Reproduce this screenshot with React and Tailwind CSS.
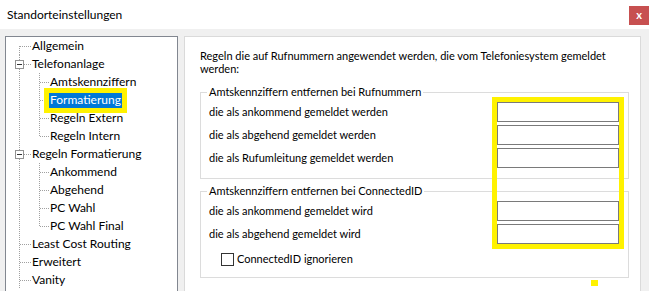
import React from 'react';

const treeItems = [
  { label: 'Allgemein', level: 0, first: true },
  { label: 'Telefonanlage', level: 0, expanded: true },
  { label: 'Amtskennziffern', level: 1 },
  { label: 'Formatierung', level: 1, selected: true },
  { label: 'Regeln Extern', level: 1 },
  { label: 'Regeln Intern', level: 1, last: true },
  { label: 'Regeln Formatierung', level: 0, expanded: true },
  { label: 'Ankommend', level: 1 },
  { label: 'Abgehend', level: 1 },
  { label: 'PC Wahl', level: 1 },
  { label: 'PC Wahl Final', level: 1, last: true },
  { label: 'Least Cost Routing', level: 0 },
  { label: 'Erweitert', level: 0 },
  { label: 'Vanity', level: 0 },
];

const dot = { stroke: '#a0a0a0', strokeWidth: 1, strokeDasharray: '1 1', shapeRendering: 'crispEdges' };

function Gutter({ item }) {
  const w = item.level === 0 ? 25 : 43;
  return (
    <svg width={w} height="18" className="shrink-0">
      {/* root vertical */}
      <line x1="13.5" y1={item.first ? 9 : 0} x2="13.5" y2="18" style={dot} />
      {item.level === 0 && !item.expanded && <line x1="14" y1="9.5" x2="25" y2="9.5" style={dot} />}
      {item.level === 0 && item.expanded && (
        <>
          <line x1="18" y1="9.5" x2="25" y2="9.5" style={dot} />
          <rect x="9.5" y="5.5" width="8" height="8" fill="#fff" stroke="#919191" shapeRendering="crispEdges" />
          <line x1="11" y1="9.5" x2="16" y2="9.5" stroke="#333" shapeRendering="crispEdges" />
        </>
      )}
      {item.level === 1 && (
        <>
          <line x1="33.5" y1="0" x2="33.5" y2={item.last ? 10 : 18} style={dot} />
          <line x1="34" y1="9.5" x2="43" y2="9.5" style={dot} />
        </>
      )}
    </svg>
  );
}

function TreeRow({ item }) {
  return (
    <div className="flex h-[18px] items-stretch">
      <Gutter item={item} />
      {item.selected ? (
        <span className="relative px-[1px] leading-[18px] bg-[#0078d7] text-white">
          {item.label}
          <span className="absolute -left-[5px] -right-[5px] -top-[3px] -bottom-[4px] border-[5px] border-[#fff200]" />
        </span>
      ) : (
        <span className="px-[1px] leading-[18px] text-black">{item.label}</span>
      )}
    </div>
  );
}

function Field() {
  return <div className="w-[122px] h-[20px] border border-[#7a7a7a] bg-white shrink-0" />;
}

function FieldRow({ label }) {
  return (
    <div className="flex h-[20px] items-center justify-between">
      <span>{label}</span>
      <Field />
    </div>
  );
}

export default function App() {
  return (
    <div className="w-[649px] h-[291px] overflow-hidden bg-[#f0f0f0] flex flex-col font-['Lato',sans-serif] text-[12px] text-black">
      <div className="h-[29px] shrink-0 bg-white flex items-start justify-between">
        <span className="pl-[7px] leading-[29px]">Standorteinstellungen</span>
        <div className="mt-[6px] w-[20px] h-[19px] bg-[#c75050] text-white text-[11px] font-bold leading-[18px] text-center">x</div>
      </div>

      <div className="flex gap-[6px] px-[5px] pt-[7px]">
        <div className="w-[173px] h-[290px] shrink-0 border border-[#828790] bg-white">
          {treeItems.map((item) => (
            <TreeRow key={item.label} item={item} />
          ))}
        </div>

        <div className="relative w-[457px] h-[290px] shrink-0 border border-[#dadada] bg-white pl-[15px] pr-[11px] pt-[12px] text-[11px]">
          <p className="leading-[13px]">
            Regeln die auf Rufnummern angewendet werden, die vom Telefoniesystem gemeldet
            <br />
            werden:
          </p>

          <fieldset className="mt-[9px] border border-[#dcdcdc] pl-[8px] pr-[9px] pt-[2px] pb-[10px]">
            <legend className="-ml-[2px] px-[2px] leading-[16px]">Amtskennziffern entfernen bei Rufnummern</legend>
            <div className="flex flex-col gap-[3px]">
              <FieldRow label="die als ankommend gemeldet werden" />
              <FieldRow label="die als abgehend gemeldet werden" />
              <FieldRow label="die als Rufumleitung gemeldet werden" />
            </div>
          </fieldset>

          <fieldset className="mt-[4px] border border-[#dcdcdc] pl-[8px] pr-[9px] pt-[2px] pb-[9px]">
            <legend className="-ml-[2px] px-[2px] leading-[16px]">Amtskennziffern entfernen bei ConnectedID</legend>
            <div className="flex flex-col gap-[3px]">
              <FieldRow label="die als ankommend gemeldet wird" />
              <FieldRow label="die als abgehend gemeldet wird" />
            </div>
            <div className="mt-[6px] ml-[12px] flex h-[18px] items-center gap-[3px]">
              <span className="w-[13px] h-[13px] border border-[#333333] bg-white" />
              <span>ConnectedID ignorieren</span>
            </div>
          </fieldset>

          <div className="absolute left-[307px] top-[60px] w-[132px] h-[152px] border-[5px] border-[#fff200]" />
          <div className="absolute left-[406px] top-[243px] w-[7px] h-[6px] bg-[#fff200]" />
        </div>
      </div>
    </div>
  );
}
